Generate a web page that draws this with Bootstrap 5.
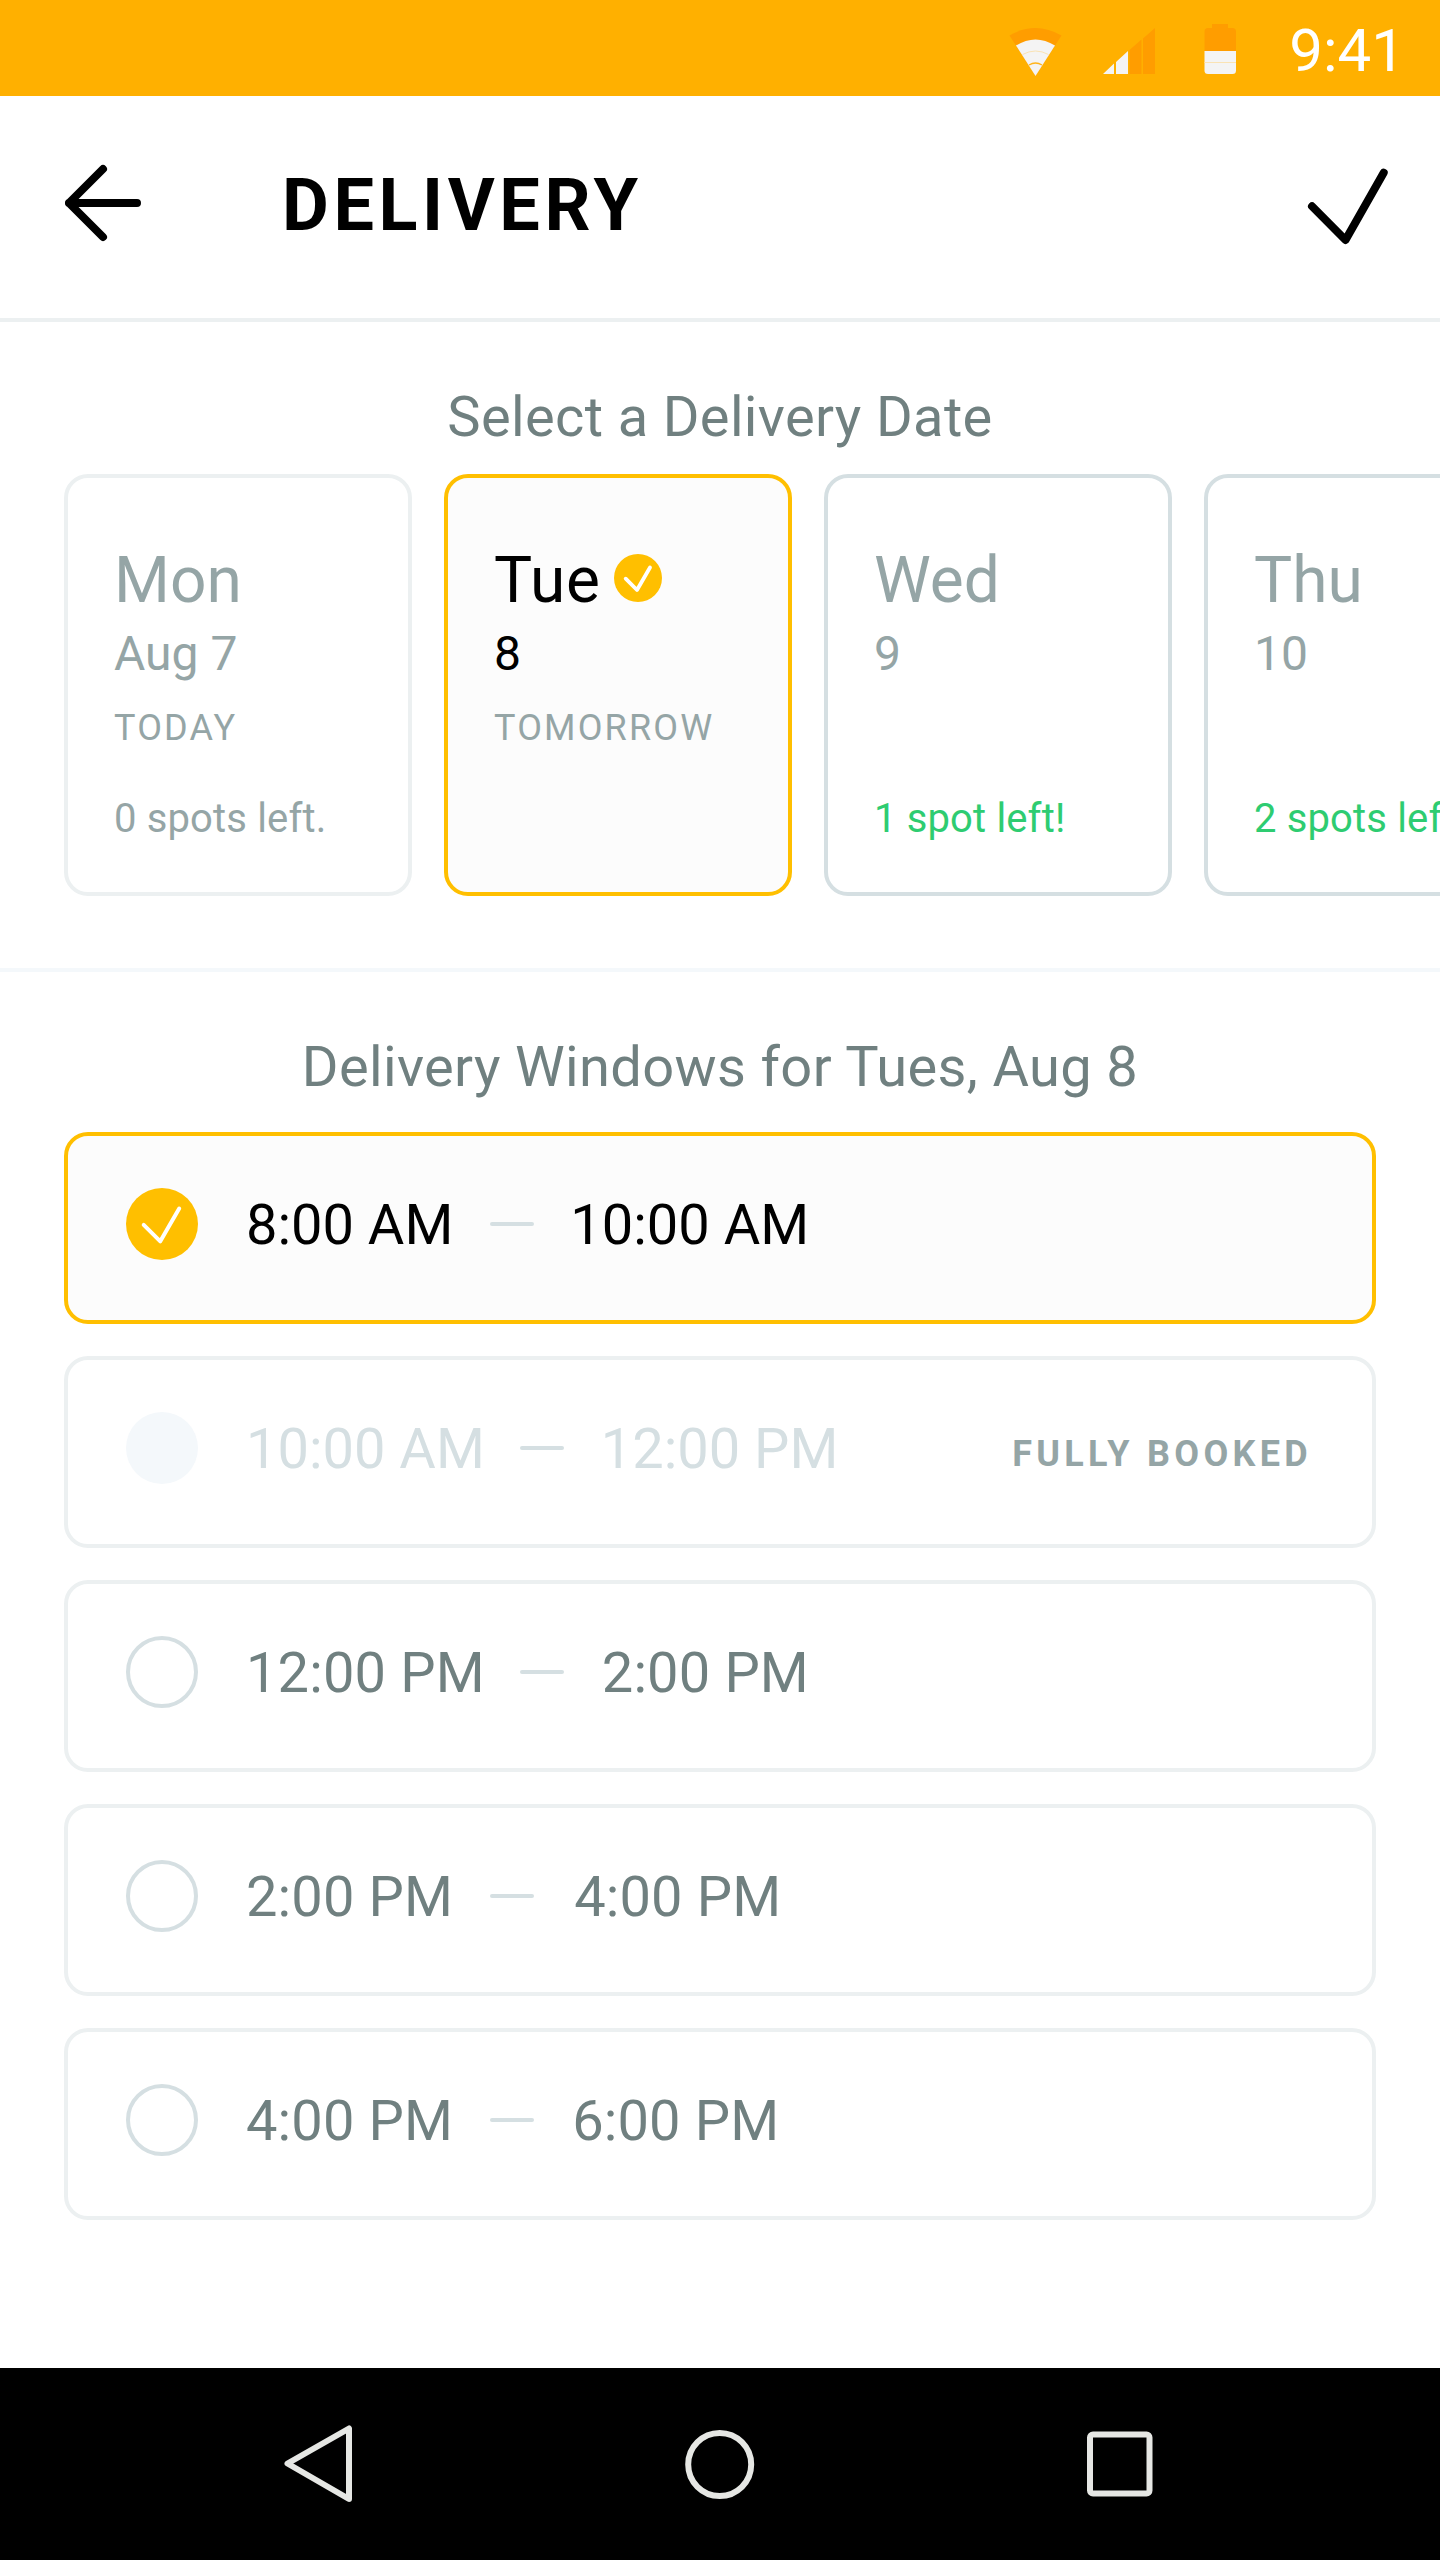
<!DOCTYPE html>
<html lang="en">
<head>
<meta charset="utf-8">
<meta name="viewport" content="width=device-width, initial-scale=1">
<title>Delivery</title>
<link href="https://cdn.jsdelivr.net/npm/bootstrap@5.3.0/dist/css/bootstrap.min.css" rel="stylesheet">
<style>
:root{--amber:#ffbf00;--line:#ecf0f1;--line-strong:#d5dfe2;--slate:#708080;--mist:#95a5a6;--go:#2ecc71}
body{font-family:Roboto,sans-serif;background:#fff;color:#000;height:2560px;overflow:hidden}
svg{display:block;flex:none}
.status-bar{height:96px;background:#ffb000;padding-right:35px}
.clock{font-size:60px;line-height:72px;padding-top:6px;margin-left:52px}
.app-bar{height:226px;border-bottom:4px solid var(--line);padding:0 52px 8px 65px}
.app-title{font-size:72px;line-height:80px;font-weight:700;letter-spacing:4.6px;margin:5px 0 0 140px}
.section-title{font-size:56px;line-height:64px;font-weight:400;letter-spacing:.36px;color:var(--slate);margin:0}
.dates{padding:63px 0 72px 64px;border-bottom:4px solid #f4f8fb}
.dates .section-title{margin:0 64px 25px 0}
.date-strip{gap:32px}
.date-card{flex:none;width:348px;height:422px;border:4px solid var(--line-strong);border-radius:24px;padding:67px 0 49px 46px;color:var(--mist);background:#fff}
.date-card.is-off,.slot{border-color:var(--line)}
.date-card.is-picked,.slot.is-picked{border-color:var(--amber);background:#fcfcfc;color:#000}
.day-name{font-size:64px;line-height:72px;gap:13px}
.is-picked .day-name{letter-spacing:.8px}
.day-name svg{margin-bottom:6px}
.day-num{font-size:48px;line-height:56px;margin-top:9px}
.day-note{font-size:36px;line-height:44px;margin-top:24px;letter-spacing:2.15px;color:var(--mist)}
.spots{font-size:40px;line-height:48px;letter-spacing:.15px}
.spots.is-open{color:var(--go)}
.windows{padding:63px 64px 0}
.windows .section-title{margin-bottom:33px}
.slot-list{gap:32px}
.slot{height:192px;border:4px solid var(--line);border-radius:24px;padding:52px 60px 60px 58px;font-size:56px;line-height:64px;color:var(--slate)}
.slot span{padding-top:2px}
.slot.is-full{color:var(--line-strong)}
.slot.is-free{letter-spacing:.15px}
.tick{width:72px;height:72px;border:4px solid var(--line-strong);margin-right:48px;flex:none}
.slot.is-full .tick{border:0;background:#f4f8fb}
.tick-on{margin-right:48px}
.dash{width:44px;height:4px;border-radius:2px;background:var(--line-strong);margin:0 36px 0 37px}
.after-wide{margin:0 37px 0 35px}
.before-two{margin-right:38px}
.before-four{margin-right:40px}
.before-six{margin-right:38px}
.slot .full-note{font-size:36px;line-height:44px;font-weight:700;letter-spacing:4.3px;color:var(--mist);padding-top:11px}
.nav-keys{height:192px;background:#000;padding:0 287px 0 284px}
</style>
</head>
<body class="d-flex flex-column">
<div class="status-bar d-flex align-items-center text-white">
  <svg class="ms-auto" width="228" height="96" viewBox="1009 0 228 96">
    <path fill="#ff9d00" d="M1009.500 35.500Q1035.500 20.500 1061.500 35.500L1035.500 76Z"/>
    <path fill="#f4f4f4" d="M1016 45.500Q1035.500 33.500 1055 45.500L1035.500 76Z"/>
    <path fill="none" stroke="#fae3b4" d="M1022.500 54.500Q1035.500 47.500 1048.500 54.500"/>
    <path fill="none" stroke="#ffb41c" stroke-width="1.400" d="M1029 65Q1035.500 61 1042 65"/>
    <path fill="#f4f4f4" d="M1103 74L1114 63.500V74ZM1116 74V62L1128 51V74Z"/>
    <path fill="#ff9d00" d="M1129.500 74V50L1141.500 39.500V74ZM1143 74V38.500L1155 28V74Z"/>
    <path fill="#ff9d00" d="M1204.500 51V31.500Q1204.500 28 1208 28H1212V24H1228V28H1232.500Q1236 28 1236 31.500V51Z"/>
    <path fill="#f4f4f4" d="M1204.500 51H1236V70.500Q1236 74 1232.500 74H1208Q1204.500 74 1204.500 70.500Z"/>
    <path stroke="#fae3b4" d="M1204.500 62.500H1236"/>
  </svg>
  <div class="clock">9:41</div>
</div>

<header class="app-bar d-flex align-items-center">
  <svg width="77" height="78" viewBox="65 164 77 78" fill="none" stroke="#000" stroke-width="8" stroke-linecap="round" stroke-linejoin="round"><path d="M103 169L69 203L103 237M69 203H137"/></svg>
  <h1 class="app-title">DELIVERY</h1>
  <svg class="ms-auto" width="80" height="78" viewBox="1308 164 80 78" overflow="visible" fill="none" stroke="#000" stroke-width="8" stroke-linecap="round" stroke-linejoin="round"><path d="M1312 206.300L1345.500 240L1383.700 172.700"/></svg>
</header>

<section class="dates">
  <h2 class="section-title text-center">Select a Delivery Date</h2>
  <div class="date-strip d-flex overflow-hidden">
    <div class="date-card is-off d-flex flex-column">
      <div class="day-name">Mon</div><div class="day-num">Aug 7</div><div class="day-note">TODAY</div>
      <div class="spots mt-auto">0 spots left.</div>
    </div>
    <div class="date-card is-picked d-flex flex-column">
      <div class="day-name d-flex align-items-center">Tue
        <svg width="48" height="48" viewBox="0 0 48 48"><circle cx="24" cy="24" r="24" fill="#ffbf00"/><path d="M11.700 24.700L23 36L36 13.500" fill="none" stroke="#fff" stroke-width="3.800" stroke-linecap="round" stroke-linejoin="round"/></svg>
      </div><div class="day-num">8</div><div class="day-note">TOMORROW</div>
    </div>
    <div class="date-card d-flex flex-column">
      <div class="day-name">Wed</div><div class="day-num">9</div>
      <div class="spots is-open mt-auto">1 spot left!</div>
    </div>
    <div class="date-card d-flex flex-column">
      <div class="day-name">Thu</div><div class="day-num">10</div>
      <div class="spots is-open mt-auto">2 spots left!</div>
    </div>
  </div>
</section>

<section class="windows">
  <h2 class="section-title text-center">Delivery Windows for Tues, Aug 8</h2>
  <div class="slot-list d-flex flex-column">
    <div class="slot is-picked d-flex align-items-center">
      <svg class="tick-on" width="72" height="72" viewBox="0 0 72 72"><circle cx="36" cy="36" r="36" fill="#ffbf00"/><path d="M17.700 36.800L34.300 53.300L53.200 20.500" fill="none" stroke="#fff" stroke-width="4" stroke-linecap="round" stroke-linejoin="round"/></svg>
      <span>8:00 AM</span><i class="dash"></i><span>10:00 AM</span>
    </div>
    <div class="slot is-full d-flex align-items-center">
      <i class="tick rounded-circle"></i><span>10:00 AM</span><i class="dash after-wide"></i><span>12:00 PM</span>
      <span class="full-note ms-auto">FULLY BOOKED</span>
    </div>
    <div class="slot is-free d-flex align-items-center">
      <i class="tick rounded-circle"></i><span>12:00 PM</span><i class="dash after-wide before-two"></i><span>2:00 PM</span>
    </div>
    <div class="slot is-free d-flex align-items-center">
      <i class="tick rounded-circle"></i><span>2:00 PM</span><i class="dash before-four"></i><span>4:00 PM</span>
    </div>
    <div class="slot is-free d-flex align-items-center">
      <i class="tick rounded-circle"></i><span>4:00 PM</span><i class="dash before-six"></i><span>6:00 PM</span>
    </div>
  </div>
</section>

<nav class="nav-keys mt-auto d-flex align-items-center justify-content-between">
  <svg width="69" height="78" viewBox="284 2425 69 78" fill="none" stroke="#e6e7e4" stroke-width="6" stroke-linejoin="round"><path d="M287.500 2463.500L349 2428.500V2499Z"/></svg>
  <svg width="70" height="70" viewBox="0 0 70 70" fill="none" stroke="#e6e7e4" stroke-width="6"><circle cx="34.700" cy="35.500" r="31.500"/></svg>
  <svg width="66" height="66" viewBox="0 0 66 66" fill="none" stroke="#e6e7e4" stroke-width="6"><rect x="3" y="3.500" width="59.500" height="59" rx="3"/></svg>
</nav>
<script src="https://cdn.jsdelivr.net/npm/bootstrap@5.3.0/dist/js/bootstrap.bundle.min.js"></script>
</body>
</html>
